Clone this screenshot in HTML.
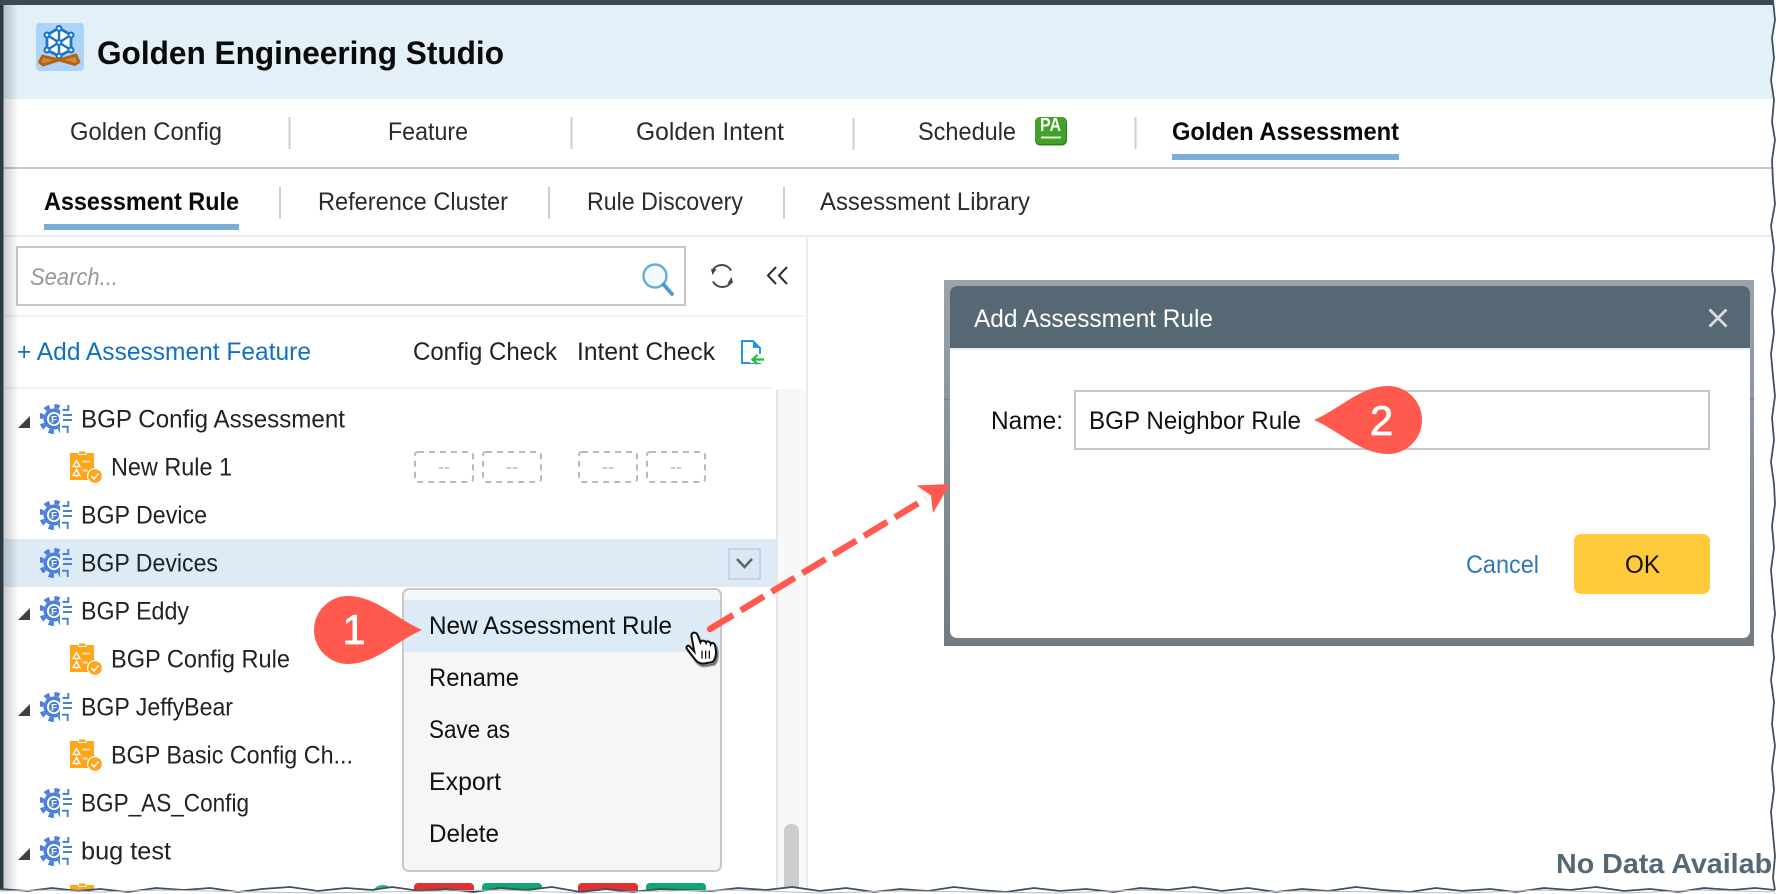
<!DOCTYPE html>
<html lang="en">
<head>
<meta charset="utf-8">
<title>Golden Engineering Studio</title>
<style>
html,body{margin:0;padding:0;background:#fff;}
#r{position:relative;width:1778px;height:894px;overflow:hidden;background:#fff;}
svg{display:block;position:absolute;left:0;top:0;}
text{font-family:"Liberation Sans",sans-serif;}
.t{font-size:25px;fill:#2b2b2b;}
.b{font-size:25px;fill:#0a0a0a;font-weight:700;}
.n{font-size:25px;fill:#222;}
.m{font-size:25px;fill:#111;}
.d{font-size:15px;fill:#aaa;}
</style>
</head>
<body>
<div id="r">
<svg width="1778" height="894" viewBox="0 0 1778 894" xmlns="http://www.w3.org/2000/svg">
<defs>
<linearGradient id="sh" x1="0" x2="1" y1="0" y2="0">
<stop offset="0" stop-color="#000" stop-opacity=".2"/>
<stop offset="1" stop-color="#000" stop-opacity="0"/>
</linearGradient>
<linearGradient id="bd" x1="0" x2="0" y1="0" y2="1">
<stop offset="0" stop-color="#9aa3ab"/>
<stop offset="1" stop-color="#737b82"/>
</linearGradient>
<clipPath id="gc"><rect x="0" y="0" width="20" height="30"/></clipPath>
<symbol id="gear" viewBox="0 0 32 30" width="32" height="30" overflow="visible">
<g clip-path="url(#gc)">
<circle cx="14" cy="15" r="10.5" fill="#4a80e4"/>
<circle cx="14" cy="15" r="12.8" fill="none" stroke="#4a80e4" stroke-width="4.4" stroke-dasharray="5.2 4.85"/>
</g>
<circle cx="14" cy="15" r="7" fill="#fff"/>
<circle cx="14" cy="15" r="5.2" fill="#4a80e4"/>
<text x="14" y="18.6" font-size="9.5" font-weight="700" fill="#fff" text-anchor="middle">F</text>
<g fill="none" stroke="#4a80e4" stroke-width="2">
<path d="M22.5 6H28.3V1"/>
<path d="M23 11H32"/>
<path d="M23 16H32"/>
<path d="M22 22.7H27.7V29"/>
</g>
</symbol>
<symbol id="rule" viewBox="0 0 32 32" width="32" height="32" overflow="visible">
<rect x="0" y="2" width="24" height="27" fill="#ffa51a"/>
<rect x="8.5" y="0" width="7.5" height="3.5" rx="1" fill="#ffa51a" stroke="#fff" stroke-width="1"/>
<path d="M6.5 9.5L10 15.5H3Z M6.5 18.5L10 24.5H3Z" fill="none" stroke="#fff" stroke-width="1.4"/>
<path d="M12.5 10.5H20M12.5 19.5H17.5" stroke="#fff" stroke-opacity=".75" stroke-width="1.8"/>
<circle cx="25" cy="25" r="7.4" fill="#ffa51a" stroke="#fff" stroke-width="1.2"/>
<path d="M21.4 25.2L24 27.8L28.6 22.6" fill="none" stroke="#fff" stroke-width="1.5"/>
</symbol>
<path id="hand" d="M103 68C95 68 93 75 95 82L103 125L88 108C82 104 76 112 82 118L105 148C112 158 122 162 135 160L158 156C165 150 169 135 168 122L165 105C162 98 154 97 152 102C150 93 140 92 138 98C135 90 124 90 121 97L113 76C111 71 107 68 103 68Z"/>
</defs>

<rect width="1778" height="894" fill="#fff"/>

<!-- header -->
<rect x="0" y="4" width="1778" height="95" fill="#e3f0f8"/>
<rect x="36" y="23" width="48" height="48" rx="4" fill="#aed3f9"/>
<g>
<path d="M59 28L71 35V50L59 56L47 50V35Z" fill="#fff" stroke="#1976c8" stroke-width="2.8"/>
<path d="M59 28V56M47 35L71 50M71 35L47 50" fill="none" stroke="#1976c8" stroke-width="2.4"/>
<g fill="#1976c8" stroke="#1976c8" stroke-width="1">
<circle cx="59" cy="28.5" r="3"/><circle cx="47" cy="35" r="3"/><circle cx="71" cy="35" r="3"/>
<circle cx="47" cy="50" r="3"/><circle cx="71" cy="50" r="3"/><circle cx="59" cy="56" r="3"/>
<circle cx="59" cy="42.5" r="3"/>
</g>
<g fill="#fff">
<circle cx="59" cy="28.5" r="1.4"/><circle cx="47" cy="35" r="1.4"/><circle cx="71" cy="35" r="1.4"/>
<circle cx="47" cy="50" r="1.4"/><circle cx="71" cy="50" r="1.4"/><circle cx="59" cy="56" r="1.4"/>
<circle cx="59" cy="42.5" r="1.4"/>
</g>
<path d="M39.5 62L42.5 56L59 60L76 55L79 62L75 64.5L59 60L43 65Z" fill="#c98a3f" stroke="#b3620f" stroke-width="2.8" stroke-linejoin="round"/>
</g>
<text x="97" y="64" font-size="32" font-weight="700" fill="#0a0a0a" textLength="407" lengthAdjust="spacingAndGlyphs">Golden Engineering Studio</text>

<!-- tabs row 1 -->
<text class="t" x="70" y="140" textLength="152" lengthAdjust="spacingAndGlyphs">Golden Config</text>
<rect x="288.5" y="117" width="2" height="32" fill="#cfcfcf"/>
<text class="t" x="388" y="140" textLength="80" lengthAdjust="spacingAndGlyphs">Feature</text>
<rect x="570.5" y="117" width="2" height="32" fill="#cfcfcf"/>
<text class="t" x="636" y="140" textLength="148" lengthAdjust="spacingAndGlyphs">Golden Intent</text>
<rect x="852.5" y="118" width="2" height="32" fill="#cfcfcf"/>
<text class="t" x="918" y="140" textLength="98" lengthAdjust="spacingAndGlyphs">Schedule</text>
<rect x="1035" y="117" width="32" height="28.5" rx="5" fill="#2f7f1e"/>
<rect x="1035" y="117" width="31" height="27" rx="5" fill="#43a02a"/>
<text x="1040" y="131" font-size="18" font-weight="700" fill="#fff" textLength="21" lengthAdjust="spacingAndGlyphs">PA</text>
<rect x="1041" y="136.5" width="20" height="2" fill="#d8eed0"/>
<rect x="1134.5" y="117" width="2" height="32" fill="#cfcfcf"/>
<text class="b" x="1172" y="140" textLength="227" lengthAdjust="spacingAndGlyphs">Golden Assessment</text>
<rect x="1172" y="154" width="227" height="6" fill="#7bafd9"/>
<rect x="0" y="167" width="1778" height="2" fill="#c8c8c8"/>

<!-- tabs row 2 -->
<text class="b" x="44" y="210" textLength="195" lengthAdjust="spacingAndGlyphs">Assessment Rule</text>
<rect x="44" y="224" width="195" height="6" fill="#7bafd9"/>
<rect x="279" y="187" width="2" height="32" fill="#cfcfcf"/>
<text class="t" x="318" y="210" textLength="190" lengthAdjust="spacingAndGlyphs">Reference Cluster</text>
<rect x="548" y="187" width="2" height="32" fill="#cfcfcf"/>
<text class="t" x="587" y="210" textLength="156" lengthAdjust="spacingAndGlyphs">Rule Discovery</text>
<rect x="783" y="187" width="2" height="32" fill="#cfcfcf"/>
<text class="t" x="820" y="210" textLength="210" lengthAdjust="spacingAndGlyphs">Assessment Library</text>
<rect x="0" y="235" width="1778" height="2" fill="#ececec"/>

<!-- sidebar -->
<rect x="806" y="237" width="2" height="657" fill="#ececec"/>
<rect x="17" y="247" width="668" height="58" fill="#fff" stroke="#c8c8c8" stroke-width="2"/>
<text x="30" y="285" font-size="24.5" font-style="italic" fill="#999" textLength="88" lengthAdjust="spacingAndGlyphs">Search...</text>
<circle cx="655" cy="276" r="11.5" fill="#f3f9fd" stroke="#68add5" stroke-width="2.4"/>
<path d="M663.5 284.5L672 294" stroke="#4a9bc9" stroke-width="3.8" stroke-linecap="round"/>
<path d="M712.5 270.5A10.5 10.5 0 0 1 731 270.5" fill="none" stroke="#444" stroke-width="2"/>
<path d="M731.5 281.5A10.5 10.5 0 0 1 713 281.5" fill="none" stroke="#444" stroke-width="2"/>
<path d="M711 269L716.5 269L712.5 275Z" fill="#444"/>
<path d="M733 283L727.5 283.5L731.5 277Z" fill="#444"/>
<path d="M776 267L768 275.5L776 284M787 267L779 275.5L787 284" fill="none" stroke="#222" stroke-width="2"/>
<rect x="5" y="315" width="802" height="2" fill="#f3f3f3"/>
<text x="17" y="360" font-size="25" fill="#1270c4" textLength="294" lengthAdjust="spacingAndGlyphs">+ Add Assessment Feature</text>
<text class="n" x="413" y="360" textLength="144" lengthAdjust="spacingAndGlyphs">Config Check</text>
<text class="n" x="577" y="360" textLength="138" lengthAdjust="spacingAndGlyphs">Intent Check</text>
<path d="M742 341H753L760 348V363H742Z" fill="#fff" stroke="#2196f3" stroke-width="2"/>
<path d="M753 341V348H760Z" fill="#2196f3"/>
<rect x="750" y="354" width="14" height="9" fill="#fff"/>
<path d="M764 359.5H753M757.5 355L752.5 359.5L757.5 364" fill="none" stroke="#22c22e" stroke-width="2.2"/>
<rect x="5" y="387" width="769" height="2" fill="#f3f3f3"/>

<!-- scroll -->
<rect x="777" y="389" width="29" height="505" fill="#f8f8f8"/>
<rect x="776" y="389" width="2" height="505" fill="#e6e6e6"/>
<rect x="784" y="824" width="15" height="70" rx="7" fill="#cdcdcd"/>

<!-- highlight row -->
<rect x="4" y="539" width="773" height="48" fill="#dcebf6"/>
<rect x="729" y="549" width="31" height="30" fill="#dde7f2" stroke="#c2d4ea" stroke-width="2"/>
<path d="M737 559L744.5 567L752 559" fill="none" stroke="#5c6670" stroke-width="2.6"/>

<!-- tree -->
<path d="M30 416V428H18Z" fill="#3f3f3f"/>
<use href="#gear" x="40" y="404"/>
<text class="n" x="81" y="427.5" textLength="264" lengthAdjust="spacingAndGlyphs">BGP Config Assessment</text>
<use href="#rule" x="70" y="451"/>
<text class="n" x="111" y="475.5" textLength="121" lengthAdjust="spacingAndGlyphs">New Rule 1</text>
<g fill="none" stroke="#b9b9b9" stroke-width="2" stroke-dasharray="6 5">
<rect x="415" y="452" width="58" height="30" rx="3"/>
<rect x="483" y="452" width="58" height="30" rx="3"/>
<rect x="579" y="452" width="58" height="30" rx="3"/>
<rect x="647" y="452" width="58" height="30" rx="3"/>
</g>
<text class="d" x="438" y="472" textLength="12" lengthAdjust="spacingAndGlyphs">--</text>
<text class="d" x="506" y="472" textLength="12" lengthAdjust="spacingAndGlyphs">--</text>
<text class="d" x="602" y="472" textLength="12" lengthAdjust="spacingAndGlyphs">--</text>
<text class="d" x="670" y="472" textLength="12" lengthAdjust="spacingAndGlyphs">--</text>

<use href="#gear" x="40" y="500"/>
<text class="n" x="81" y="523.5" textLength="126" lengthAdjust="spacingAndGlyphs">BGP Device</text>
<use href="#gear" x="40" y="548"/>
<text class="n" x="81" y="571.5" textLength="137" lengthAdjust="spacingAndGlyphs">BGP Devices</text>
<path d="M30 608V620H18Z" fill="#3f3f3f"/>
<use href="#gear" x="40" y="596"/>
<text class="n" x="81" y="619.5" textLength="108" lengthAdjust="spacingAndGlyphs">BGP Eddy</text>
<use href="#rule" x="70" y="643"/>
<text class="n" x="111" y="667.5" textLength="179" lengthAdjust="spacingAndGlyphs">BGP Config Rule</text>
<path d="M30 704V716H18Z" fill="#3f3f3f"/>
<use href="#gear" x="40" y="692"/>
<text class="n" x="81" y="715.5" textLength="152" lengthAdjust="spacingAndGlyphs">BGP JeffyBear</text>
<use href="#rule" x="70" y="739"/>
<text class="n" x="111" y="763.5" textLength="242" lengthAdjust="spacingAndGlyphs">BGP Basic Config Ch...</text>
<use href="#gear" x="40" y="788"/>
<text class="n" x="81" y="811.5" textLength="168" lengthAdjust="spacingAndGlyphs">BGP_AS_Config</text>
<path d="M30 848V860H18Z" fill="#3f3f3f"/>
<use href="#gear" x="40" y="836"/>
<text class="n" x="81" y="859.5" textLength="90" lengthAdjust="spacingAndGlyphs">bug test</text>
<use href="#rule" x="70" y="883"/>
<circle cx="383" cy="897" r="10.5" fill="none" stroke="#1fb88a" stroke-width="3"/>
<rect x="414" y="883" width="60" height="14" rx="4" fill="#e03232"/>
<rect x="482" y="883" width="60" height="14" rx="4" fill="#10a870"/>
<rect x="578" y="883" width="60" height="14" rx="4" fill="#e03232"/>
<rect x="646" y="883" width="60" height="14" rx="4" fill="#10a870"/>

<!-- context menu -->
<rect x="403" y="589" width="318" height="282" rx="6" fill="#f6f6f6" stroke="#c8c8c8" stroke-width="2"/>
<rect x="404" y="600" width="316" height="52" fill="#dcebf6"/>
<text class="m" x="429" y="634" textLength="243" lengthAdjust="spacingAndGlyphs">New Assessment Rule</text>
<text class="m" x="429" y="686" textLength="90" lengthAdjust="spacingAndGlyphs">Rename</text>
<text class="m" x="429" y="738" textLength="81" lengthAdjust="spacingAndGlyphs">Save as</text>
<text class="m" x="429" y="790" textLength="72" lengthAdjust="spacingAndGlyphs">Export</text>
<text class="m" x="429" y="842" textLength="70" lengthAdjust="spacingAndGlyphs">Delete</text>

<!-- no data -->
<text x="1556" y="873" font-size="28" font-weight="700" fill="#566875" textLength="240" lengthAdjust="spacingAndGlyphs">No Data Available</text>

<!-- dialog -->
<rect x="944" y="280" width="810" height="366" fill="url(#bd)"/>
<rect x="944" y="399" width="6" height="1" fill="#777f86"/>
<rect x="1750" y="399" width="4" height="1" fill="#777f86"/>
<rect x="950" y="286" width="800" height="352" rx="7" fill="#fff"/>
<path d="M950 348V293A7 7 0 0 1 957 286H1743A7 7 0 0 1 1750 293V348Z" fill="#576875"/>
<rect x="950" y="348" width="800" height="2" fill="#eee"/>
<text x="974" y="327" font-size="25" fill="#fff" textLength="239" lengthAdjust="spacingAndGlyphs">Add Assessment Rule</text>
<path d="M1709.5 309.5L1726.5 326.5M1726.5 309.5L1709.5 326.5" stroke="#d8dcdf" stroke-width="2.8"/>
<text class="m" x="991" y="429" textLength="72" lengthAdjust="spacingAndGlyphs">Name:</text>
<rect x="1075" y="391" width="634" height="58" fill="#fff" stroke="#c8c8c8" stroke-width="2"/>
<text class="m" x="1089" y="429" textLength="212" lengthAdjust="spacingAndGlyphs">BGP Neighbor Rule</text>
<text x="1466" y="573" font-size="25" fill="#2f78b8" textLength="73" lengthAdjust="spacingAndGlyphs">Cancel</text>
<rect x="1574" y="534" width="136" height="60" rx="7" fill="#ffc93c"/>
<text class="m" x="1625" y="573" textLength="35" lengthAdjust="spacingAndGlyphs">OK</text>

<!-- annotation -->
<path d="M422 630C395 618 375 596 348 596A34 34 0 0 0 348 664C375 664 395 642 422 630Z" fill="#ff5a4d"/>
<text x="354" y="644" font-size="42" fill="#fff" stroke="#fff" stroke-width=".7" text-anchor="middle">1</text>
<path d="M1314 420C1341 408 1361 386 1388 386A34 34 0 0 1 1388 454C1361 454 1341 432 1314 420Z" fill="#ff5a4d"/>
<text x="1381.5" y="435" font-size="42" fill="#fff" stroke="#fff" stroke-width=".7" text-anchor="middle">2</text>
<circle cx="710" cy="629" r="3.2" fill="#ff5a4d"/>
<path d="M710 629L926 498.5" fill="none" stroke="#ff5a4d" stroke-width="6.4" stroke-dasharray="27 9"/>
<path d="M950 484L933 513L931 495.4L916.5 485.5Z" fill="#ff5a4d"/>

<!-- hand -->
<g transform="translate(660 610) scale(.3333)">
<use href="#hand" x="5" y="8" fill="#000" fill-opacity=".35" stroke="#000" stroke-opacity=".35" stroke-width="8"/>
<use href="#hand" fill="#fff" stroke="#111" stroke-width="6"/>
<path d="M126 122V146M137 122V146M148 122V146" stroke="#111" stroke-width="4"/>
</g>

<!-- left edge -->
<rect x="3" y="5" width="16" height="889" fill="url(#sh)"/>
<rect x="0" y="0" width="3.5" height="894" fill="#2c3a44"/>
<rect x="0" y="0" width="1778" height="5" fill="#3a4a56"/>

<!-- torn edges -->
<path d="M1773 0L1775 20L1772 38L1774 58L1771 80L1774 100L1772 122L1775 140L1772 160L1773 182L1775 204L1771 226L1774 248L1772 270L1775 290L1772 312L1774 332L1771 354L1773 376L1775 396L1772 418L1774 440L1771 462L1774 484L1775 504L1772 526L1774 548L1771 570L1773 592L1775 614L1772 636L1774 658L1771 680L1774 702L1772 724L1775 746L1772 768L1774 790L1771 812L1773 834L1775 856L1773 878L1775 890L1778 894H1778V0Z" fill="#fff"/>
<path d="M1773 0L1775 20L1772 38L1774 58L1771 80L1774 100L1772 122L1775 140L1772 160L1773 182L1775 204L1771 226L1774 248L1772 270L1775 290L1772 312L1774 332L1771 354L1773 376L1775 396L1772 418L1774 440L1771 462L1774 484L1775 504L1772 526L1774 548L1771 570L1773 592L1775 614L1772 636L1774 658L1771 680L1774 702L1772 724L1775 746L1772 768L1774 790L1771 812L1773 834L1775 856L1773 878L1775 890" fill="none" stroke="#3f5060" stroke-width="1.8" stroke-linejoin="round"/>
<path id="bt" d="M0 889L28 891L52 888L78 891L100 889L128 892L156 888L184 890L210 888L238 892L262 889L290 887L318 891L346 888L372 890L392 887L420 891L446 889L474 892L500 888L526 890L552 887L580 892L606 889L632 892L660 889L686 890L712 891L738 888L766 890L792 887L820 891L846 888L874 892L900 889L928 891L954 887L980 890L1006 892L1034 888L1060 891L1086 889L1114 892L1140 888L1168 890L1194 887L1222 891L1248 888L1276 892L1302 889L1328 891L1356 887L1382 890L1410 892L1436 888L1462 891L1490 889L1516 892L1544 888L1570 890L1596 887L1624 891L1650 889L1678 892L1704 888L1732 890L1755 888L1775 890" fill="none" stroke="#3f5060" stroke-width="1.8" stroke-linejoin="round"/>
<path d="M0 890L28 892L52 889L78 892L100 890L128 893L156 889L184 891L210 889L238 893L262 890L290 888L318 892L346 889L372 891L392 888L420 892L446 890L474 893L500 889L526 891L552 888L580 893L606 890L632 893L660 890L686 891L712 892L738 889L766 891L792 888L820 892L846 889L874 893L900 890L928 892L954 888L980 891L1006 893L1034 889L1060 892L1086 890L1114 893L1140 889L1168 891L1194 888L1222 892L1248 889L1276 893L1302 890L1328 892L1356 888L1382 891L1410 893L1436 889L1462 892L1490 890L1516 893L1544 889L1570 891L1596 888L1624 892L1650 890L1678 893L1704 889L1732 891L1755 889L1775 891V894H0Z" fill="#fff"/>
<path d="M0 891L52 890L100 892L156 890L210 891L262 892L318 893L372 892L446 891L500 890L580 893L660 891L738 890L820 893L900 891L980 892L1060 893L1140 890L1222 893L1302 891L1382 892L1462 893L1544 890L1624 893L1704 890L1775 892" fill="none" stroke="#b4bcc2" stroke-width="1"/>
</svg>
</div>
</body>
</html>
